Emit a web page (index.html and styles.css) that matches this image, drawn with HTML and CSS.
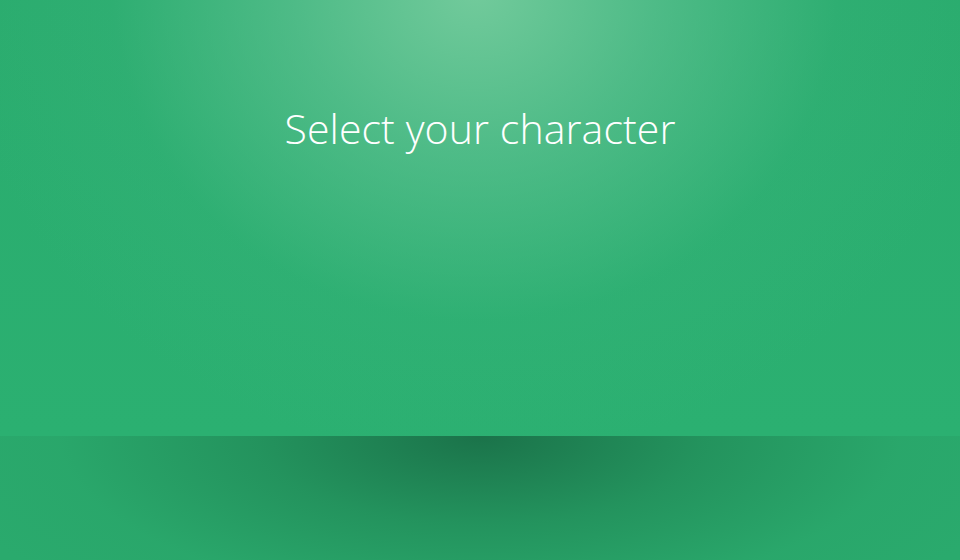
FILE: index.html
```html
<!DOCTYPE html>
<html>
<head>
<meta charset="utf-8">
<link rel="stylesheet" href="styles.css">
</head>
<body>
<div class="stage">
  <div class="wall">
    <h1 class="title">Select your character</h1>
  </div>
  <div class="floor"></div>
</div>
</body>
</html>
```
FILE: styles.css
```css
html, body {
  margin: 0;
  padding: 0;
  width: 960px;
  height: 560px;
  overflow: hidden;
}
.stage {
  display: flex;
  flex-direction: column;
  width: 960px;
  height: 560px;
  background: #2bae6f;
}
.wall {
  height: 436px;
  background:
    radial-gradient(ellipse 520px 470px at 475px -10px, rgba(118, 204, 158, 0.95) 0%, rgba(100, 196, 150, 0.62) 35%, rgba(60, 180, 125, 0.25) 70%, rgba(43, 174, 111, 0) 100%),
    linear-gradient(#2aac6e, #2bb071);
  display: flex;
  justify-content: center;
  align-items: flex-start;
}
.title {
  margin: 98px 0 0 0;
  font-family: "Open Sans", "Segoe UI", sans-serif;
  font-weight: 300;
  font-size: 41px;
  line-height: 60px;
  color: #ffffff;
  letter-spacing: 0.1px;
}
.floor {
  flex: 1;
  background:
    radial-gradient(ellipse 560px 220px at 480px 0px, rgba(26, 112, 72, 0.95) 0%, rgba(32, 135, 85, 0.65) 40%, rgba(40, 158, 100, 0.25) 75%, rgba(43, 174, 111, 0) 100%),
    #2aaa6d;
}
```
